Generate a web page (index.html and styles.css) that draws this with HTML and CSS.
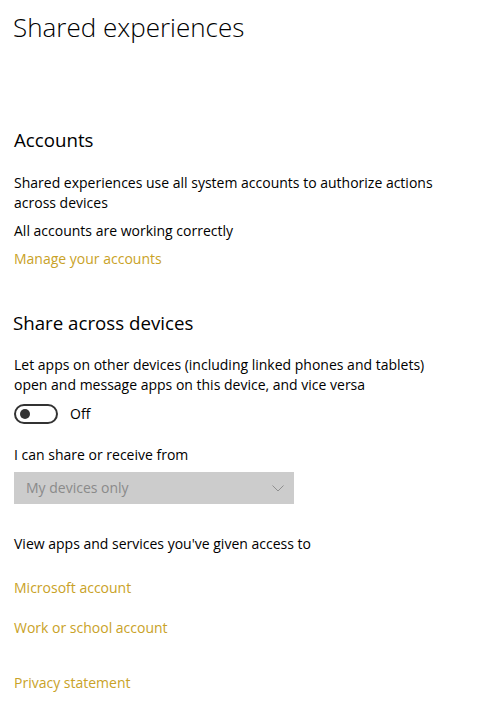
FILE: index.html
```html
<!DOCTYPE html>
<html lang="en">
<head>
<meta charset="utf-8">
<title>Shared experiences</title>
<link rel="stylesheet" href="styles.css">
</head>
<body>
<main class="page">
  <h1 class="title">Shared experiences</h1>

  <h2 class="section accounts">Accounts</h2>
  <p class="text t-desc">Shared experiences use all system accounts to authorize actions across devices</p>
  <p class="text t-gap8">All accounts are working correctly</p>
  <a class="link t-gap8" href="#">Manage your accounts</a>

  <h2 class="section share">Share across devices</h2>
  <p class="text t-desc2">Let apps on other devices (including linked phones and tablets) open and message apps on this device, and vice versa</p>
  <div class="toggle-row">
    <span class="toggle"><span class="knob"></span></span>
    <span class="toggle-label">Off</span>
  </div>
  <p class="text t-gap21">I can share or receive from</p>
  <div class="select">
    <span class="select-value">My devices only</span>
    <svg class="chev" width="12" height="7" viewBox="0 0 12 7"><path d="M0.5 0.5 L6 6 L11.5 0.5" fill="none" stroke="#8f8f8f" stroke-width="1"/></svg>
  </div>
  <p class="text t-gap30">View apps and services you've given access to</p>
  <a class="link t-gap24" href="#">Microsoft account</a>
  <a class="link t-gap20" href="#">Work or school account</a>
  <a class="link t-gap35" href="#">Privacy statement</a>
</main>
</body>
</html>
```
FILE: styles.css
```css
html, body {
  margin: 0;
  padding: 0;
  background: #ffffff;
}
body {
  font-family: "Open Sans", "Noto Sans", "Liberation Sans", sans-serif;
  color: #000000;
  font-size: 14px;
  line-height: 20px;
}
.page {
  padding: 9px 14px 0 14px;
}
.title {
  margin: 0 0 0 -1px;
  font-size: 26px;
  line-height: 36px;
  font-weight: 300;
}
.section {
  margin: 0;
  font-size: 18.7px;
  line-height: 28px;
  font-weight: 400;
}
.accounts { margin-top: 81px; }
.share { margin-top: 40px; margin-left: -1px; }
.text {
  margin: 0;
  max-width: 440px;
}
.t-desc { margin-top: 19px; }
.t-desc2 { margin-top: 18px; }
.t-gap8 { margin-top: 8px; }
.t-gap21 { margin-top: 21px; }
.t-gap30 { margin-top: 30px; }
.link {
  display: block;
  width: max-content;
  color: #c9a227;
  text-decoration: none;
}
.t-gap20 { margin-top: 20px; }
.t-gap24 { margin-top: 24px; }
.t-gap35 { margin-top: 35px; }
.toggle-row {
  margin-top: 9px;
  display: flex;
  align-items: center;
  gap: 12px;
  height: 20px;
}
.toggle {
  box-sizing: border-box;
  width: 44px;
  height: 20px;
  border: 2px solid #333333;
  border-radius: 10px;
  display: flex;
  align-items: center;
  padding-left: 4px;
}
.knob {
  width: 10px;
  height: 10px;
  border-radius: 50%;
  background: #333333;
}
.toggle-label {
  line-height: 20px;
}
.select {
  margin-top: 7px;
  box-sizing: border-box;
  width: 280px;
  height: 32px;
  background: #cccccc;
  display: flex;
  align-items: center;
  justify-content: space-between;
  padding: 0 10px 0 12px;
}
.select-value {
  color: #8a8a8a;
}
.chev {
  display: block;
}
```
